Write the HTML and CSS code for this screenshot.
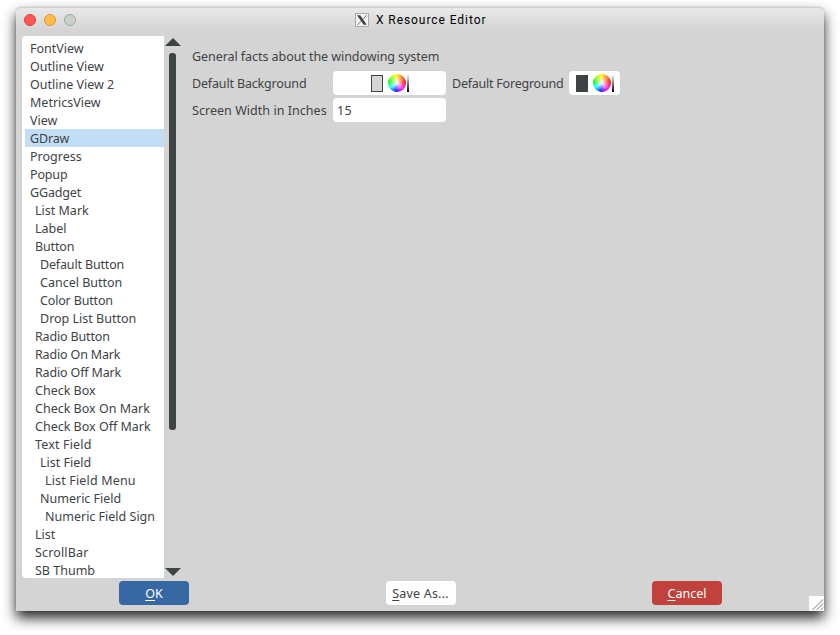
FILE: index.html
```html
<!DOCTYPE html>
<html lang="en">
<head>
<meta charset="utf-8">
<title>X Resource Editor</title>
<link rel="stylesheet" href="styles.css">
</head>
<body>
<main class="window">
  <header class="titlebar">
    <div class="lights"><i class="light close"></i><i class="light minimize"></i><i class="light zoom"></i></div>
    <svg class="xicon" width="14" height="14" viewBox="0 0 14 14"><rect x=".5" y=".5" width="13" height="13" fill="#f4f4f4" stroke="#aaa"/><path d="M2 2.2h3.2l6.6 9.6H8.6z" fill="#444"/><path d="M11.6 2 7.8 6.5M6 8.2 2.4 12" stroke="#555" stroke-width=".8"/></svg>
    <h1>X Resource Editor</h1>
  </header>
  <div class="content">
    <ul class="list">
      <li>FontView</li>
      <li>Outline View</li>
      <li>Outline View 2</li>
      <li>MetricsView</li>
      <li>View</li>
      <li class="selected tight">GDraw</li>
      <li>Progress</li>
      <li class="tight">Popup</li>
      <li class="tight">GGadget</li>
      <li class="l1">List Mark</li>
      <li class="l1">Label</li>
      <li class="l1 tight">Button</li>
      <li class="l2 tight">Default Button</li>
      <li class="l2">Cancel Button</li>
      <li class="l2 tight">Color Button</li>
      <li class="l2">Drop List Button</li>
      <li class="l1 tight">Radio Button</li>
      <li class="l1 tight">Radio On Mark</li>
      <li class="l1 tight">Radio Off Mark</li>
      <li class="l1">Check Box</li>
      <li class="l1">Check Box On Mark</li>
      <li class="l1">Check Box Off Mark</li>
      <li class="l1 loose">Text Field</li>
      <li class="l2">List Field</li>
      <li class="l3 loose">List Field Menu</li>
      <li class="l2">Numeric Field</li>
      <li class="l3">Numeric Field Sign</li>
      <li class="l1">List</li>
      <li class="l1 loose">ScrollBar</li>
      <li class="l1">SB Thumb</li>
    </ul>
    <div class="scrollbar">
      <svg width="16" height="8" viewBox="0 0 16 8"><path d="M0 8 8 0l8 8z" fill="#3e4345"/></svg>
      <div class="thumb"></div>
      <svg width="16" height="8" viewBox="0 0 16 8"><path d="M0 0h16L8 8z" fill="#3e4345"/></svg>
    </div>
    <section class="panel">
      <p class="intro">General facts about the windowing system</p>
      <div class="fields">
        <span class="label tight">Default Background</span>
        <div class="box color"><i class="swatch light-swatch"></i><i class="wheel"></i><i class="ramp"></i></div>
        <span class="label second">Default Foreground</span>
        <div class="box color"><i class="swatch dark-swatch"></i><i class="wheel"></i><i class="ramp"></i></div>
        <span class="label width-label">Screen Width in Inches</span>
        <div class="box input">15</div>
      </div>
    </section>
  </div>
  <footer class="actions">
    <button class="ok"><span><u>O</u>K</span></button>
    <button class="save"><span><u>S</u>ave As...</span></button>
    <button class="cancel"><span><u>C</u>ancel</span></button>
  </footer>
  <svg class="grip" width="15" height="15" viewBox="0 0 15 15"><path d="M0 0h15v15H0z" fill="#fff"/><path d="M3.5 14 14 3.5M7.5 14 14 7.5M11.5 14 14 11.5" stroke="#777"/></svg>
</main>
</body>
</html>
```
FILE: styles.css
```css
* { box-sizing: border-box; }
body {
  margin: 0;
  height: 635px;
  padding: 7px 16px 0;
  overflow: hidden;
  background: #fff;
  color: #3e4345;
  font: 12.5px/18px "Noto Sans", sans-serif;
}
.window {
  position: relative;
  width: 808px;
  height: 604px;
  border-radius: 5px 5px 0 0;
  background: linear-gradient(#e9e9e9, #d4d4d4 24px);
  box-shadow: 0 0 1px rgba(0,0,0,.4), 0 7px 13px rgba(0,0,0,.85);
}
.titlebar {
  display: flex;
  align-items: center;
  height: 29px;
  padding: 0 0 5px 8px;
  border-top: 1px solid #d0d0d0;
  border-radius: 5px 5px 0 0;
}
.lights { display: flex; gap: 8px; width: 331px; }
.light { width: 12px; height: 12px; border: 1px solid; border-radius: 50%; }
.close { background: #ff5754; border-color: #e23b3b; }
.minimize { background: #ffbc48; border-color: #d99a35; }
.zoom { background: #cbd0cc; border-color: #92b19a; }
h1 { margin: 0 0 0 7px; color: #000; font: 400 12px/16px Roboto, sans-serif; letter-spacing: .93px; }
.content { display: flex; height: 542px; padding-left: 6px; }
.list {
  width: 142px;
  height: 542px;
  margin: 0;
  padding: 3px 0 0 3px;
  overflow: hidden;
  border-radius: 4px 0 0 4px;
  background: #fff;
  list-style: none;
}
.list li { height: 18px; padding-left: 5px; line-height: 20px; white-space: nowrap; }
.list .selected { background: #c1def6; }
.list .l1 { padding-left: 10px; }
.list .l2 { padding-left: 15px; }
.list .l3 { padding-left: 20px; }
.loose { letter-spacing: .16px; }
.tight { letter-spacing: -.16px; }
.scrollbar { display: flex; flex-direction: column; align-items: center; width: 17px; padding: 2px 0; }
.scrollbar svg { display: block; }
.scrollbar svg:last-child { margin-top: auto; }
.thumb { width: 7px; height: 377px; margin-top: 7px; border-radius: 3px; background: #3e4345; }
.panel { padding: 12px 0 0 11px; }
.intro { margin: 0 0 5px; letter-spacing: -.06px; }
.fields { display: grid; grid-template-columns: 141px 113px 123px 51px; row-gap: 3px; align-items: center; }
.label { padding-top: 2px; white-space: nowrap; }
.second { padding-left: 6px; letter-spacing: -.23px; }
.width-label { letter-spacing: .04px; }
.box { height: 24px; border-radius: 4px; background: #fff; }
.color { display: flex; justify-content: center; align-items: center; }
.swatch { width: 12px; height: 17px; border: 1px solid #3e4345; }
.light-swatch { background: #d4d4d4; }
.dark-swatch { background: #3e4345; }
.wheel {
  width: 18px;
  height: 18px;
  margin-left: 5px;
  border-radius: 50%;
  background: radial-gradient(closest-side, #fff, rgba(255,255,255,0)), conic-gradient(from 80deg, red, #f0f 60deg, #00f 110deg, #0ff 155deg, #0f0 200deg, #ff0 270deg, red);
}
.ramp { width: 2px; height: 18px; margin-left: 1px; background: linear-gradient(#fff, #000); }
.input { padding: 4px 4px 0; letter-spacing: .4px; }
.actions { display: flex; justify-content: space-between; padding: 3px 102px 0 103px; }
button {
  width: 70px;
  height: 24px;
  padding: 2px 0 0;
  border: 0;
  border-radius: 4px;
  background: #fff;
  color: #3e4345;
  font: inherit;
}
.save { letter-spacing: .2px; }
.ok { background: #3668a3; color: #fff; }
.cancel { background: #c1413c; color: #fff; }
u { text-underline-offset: 2px; text-decoration-thickness: 1px; }
.grip { position: absolute; right: 0; bottom: 0; }
```
